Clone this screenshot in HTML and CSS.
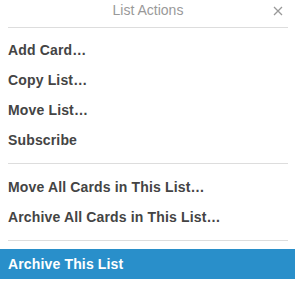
FILE: index.html
```html
<!DOCTYPE html>
<html>
<head>
<meta charset="utf-8">
<link rel="stylesheet" href="styles.css">
</head>
<body>
<div class="popover">
  <div class="header">
    <span class="title">List Actions</span>
    <span class="close" aria-label="Close">
      <svg width="10" height="10" viewBox="0 0 10 10"><path d="M1 1 L9 9 M9 1 L1 9" stroke="#999" stroke-width="1.3" fill="none"/></svg>
    </span>
  </div>
  <div class="content">
    <ul class="list">
      <li class="item">Add Card…</li>
      <li class="item">Copy List…</li>
      <li class="item">Move List…</li>
      <li class="item">Subscribe</li>
    </ul>
    <hr class="sep">
    <ul class="list">
      <li class="item">Move All Cards in This List…</li>
      <li class="item">Archive All Cards in This List…</li>
    </ul>
    <hr class="sep">
    <ul class="list">
      <li class="item active">Archive This List</li>
    </ul>
  </div>
</div>
</body>
</html>
```
FILE: styles.css
```css
html, body {
  margin: 0;
  padding: 0;
  background: #fff;
}
body {
  font-family: "Liberation Sans", Arial, sans-serif;
  font-size: 14px;
  line-height: 20px;
  color: #444;
}
.popover {
  width: 295px;
}
.header {
  position: relative;
  height: 27px;
  margin: 0 7px 0 8px;
  border-bottom: 1px solid #ddd;
  text-align: center;
}
.title {
  display: block;
  color: #999;
  line-height: 20px;
}
.close {
  position: absolute;
  right: 5px;
  top: 6px;
  width: 10px;
  height: 10px;
  display: flex;
}
.content {
  padding: 7px 7px 0 8px;
}
.list {
  list-style: none;
  margin: 0;
  padding: 0;
}
.item {
  font-weight: bold;
  letter-spacing: 0.15px;
  padding: 5px 8px;
  margin: 0 -7px 0 -8px;
  color: #444;
}
.item.active {
  background: #298fca;
  color: #fff;
}
.sep {
  border: 0;
  border-top: 1px solid #ddd;
  margin: 8px 0;
  height: 0;
}
```
